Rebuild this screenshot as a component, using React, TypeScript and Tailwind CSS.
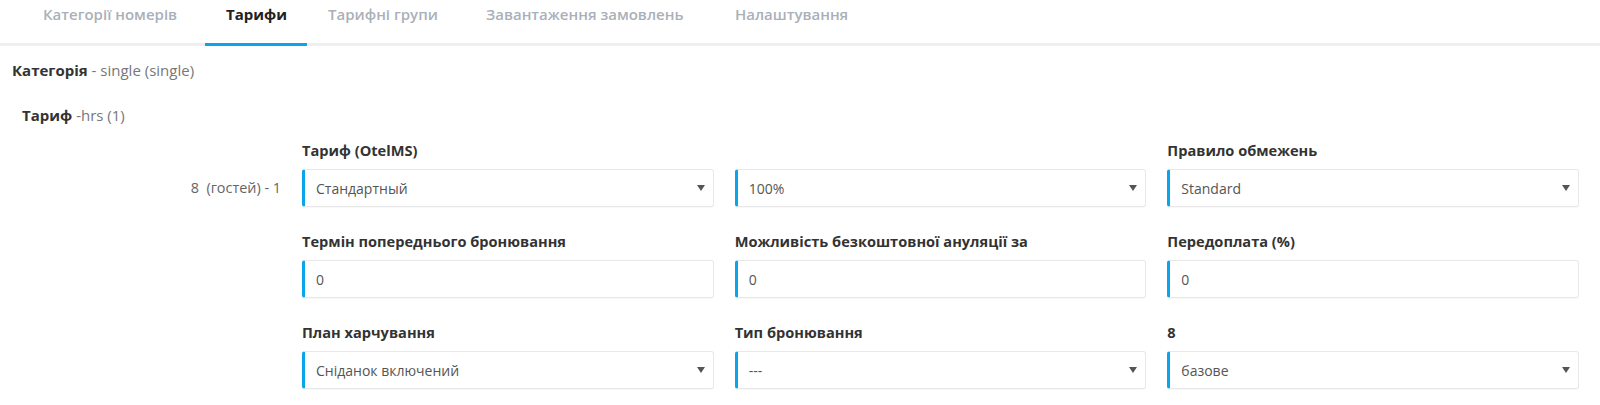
import React from 'react';

const tabs = [
  { label: 'Категорії номерів', active: false, w: 'w-[183px]' },
  { label: 'Тарифи', active: true, w: 'w-[102px]' },
  { label: 'Тарифні групи', active: false, w: 'w-[158px]' },
  { label: 'Завантаження замовлень', active: false, w: 'w-[249px]' },
  { label: 'Налаштування', active: false, w: 'w-[161px]' },
];

type Field = { label: string; value: string; select: boolean };

const fields: Field[] = [
  { label: 'Тариф (OtelMS)', value: 'Стандартный', select: true },
  { label: '', value: '100%', select: true },
  { label: 'Правило обмежень', value: 'Standard', select: true },
  { label: 'Термін попереднього бронювання', value: '0', select: false },
  { label: 'Можливість безкоштовної ануляції за', value: '0', select: false },
  { label: 'Передоплата (%)', value: '0', select: false },
  { label: 'План харчування', value: 'Сніданок включений', select: true },
  { label: 'Тип бронювання', value: '---', select: true },
  { label: '8', value: 'базове', select: true },
];

const Caret = () => (
  <svg width="8" height="6" viewBox="0 0 8 6" className="shrink-0">
    <path d="M0 0 H8 L4 6 Z" fill="#555" />
  </svg>
);

const FieldBox: React.FC<{ field: Field }> = ({ field }) => (
  <div className="flex flex-col">
    <div className="h-5 mb-[9px] text-[14.6px] leading-5 font-bold text-[#333]">{field.label}</div>
    <div className="h-[38px] flex items-center justify-between rounded-[3px] border border-[#e8e8e8] border-l-[3px] border-l-[#08a4ec] pl-[11px] pr-[8px] bg-white shadow-[0_1px_1px_rgba(0,0,0,0.03)]">
      <span className="text-[14px] text-[#555]">{field.value}</span>
      {field.select && <Caret />}
    </div>
  </div>
);

export default function App() {
  return (
    <div className="w-[1600px] h-[405px] bg-white font-['Open_Sans','Noto_Sans',sans-serif] overflow-hidden">
      {/* Tabs */}
      <nav className="flex pl-[22px] border-b-[3px] border-[#efefef]">
        {tabs.map((t) => (
          <div
            key={t.label}
            className={`${t.w} -mb-[3px] h-[46px] pl-[21px] pt-[4px] border-b-[3px] text-[15px] leading-5 whitespace-nowrap ${
              t.active ? 'border-[#08a4ec] text-[#222] font-bold' : 'border-transparent text-[#aab0b8] font-semibold'
            }`}
          >
            {t.label}
          </div>
        ))}
      </nav>

      <div className="px-3">
        <div className="mt-[14px] h-5 leading-5 text-[15px]">
          <span className="font-bold text-[#333]">Категорія</span>
          <span className="text-[#777]"> - single (single)</span>
        </div>
        <div className="mt-[25px] ml-[10px] h-5 leading-5 text-[15px]">
          <span className="font-bold text-[#333]">Тариф</span>
          <span className="text-[#777]"> -hrs (1)</span>
        </div>
      </div>

      {/* Form */}
      <div className="flex mt-[15px]">
        <div className="w-[302px] shrink-0 pt-[29px]">
          <div className="h-[38px] flex items-center justify-end pr-[21px] text-[14.4px] text-[#666]">
            8&nbsp;&nbsp;(гостей) - 1
          </div>
        </div>
        <div className="flex-1 pr-[21px] grid grid-cols-3 gap-x-[21px] gap-y-6">
          {fields.map((f, i) => (
            <FieldBox key={i} field={f} />
          ))}
        </div>
      </div>
    </div>
  );
}
